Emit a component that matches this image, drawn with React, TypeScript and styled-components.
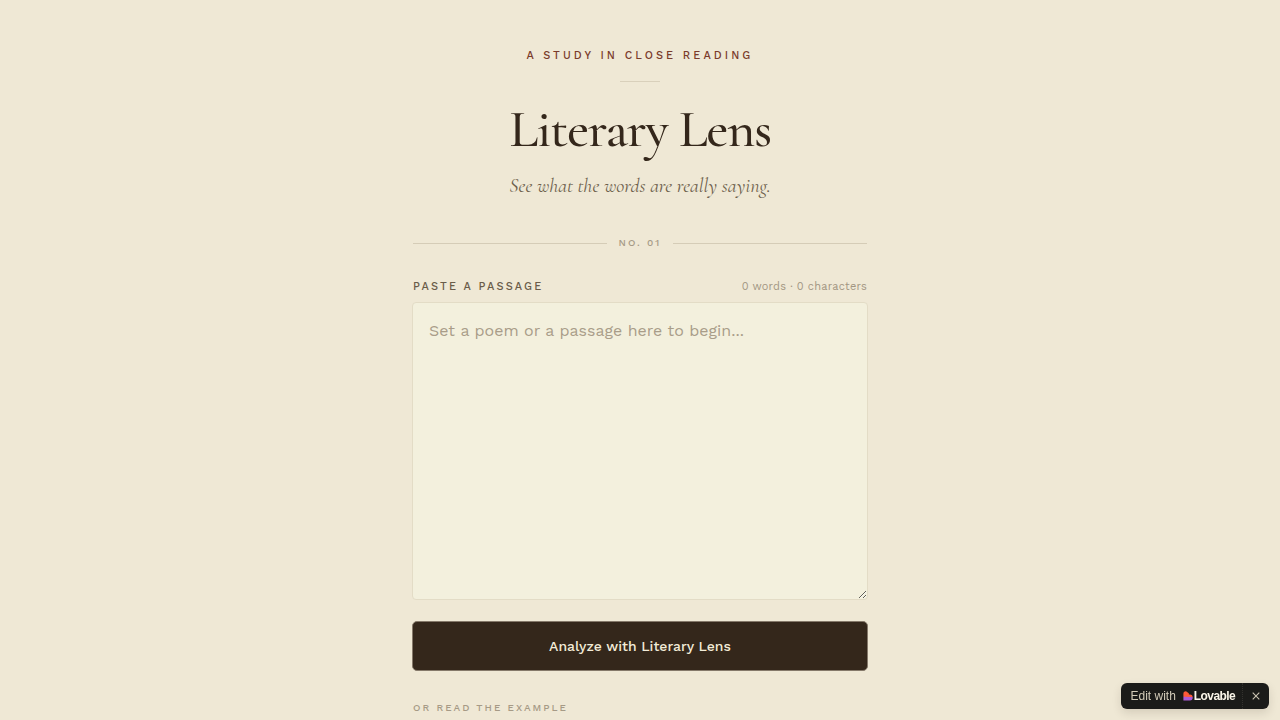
import React, { useState } from "react";
import styled, { createGlobalStyle } from "styled-components";

const sans = `"Work Sans", Inter, "Liberation Sans", sans-serif`;
const serif = `"Cormorant Garamond", "Liberation Serif", serif`;

const GlobalStyle = createGlobalStyle`
  *, *::before, *::after { box-sizing: border-box; }
  html { scrollbar-width: none; }
  body {
    margin: 0;
    min-height: 100vh;
    background: #efe8d5;
    color: #34271b;
    font-family: ${sans};
  }
`;

const Page = styled.main`
  width: 100%;
  max-width: 504px;
  margin: 0 auto;
  padding: 48px 24px 64px;
`;

const Header = styled.header`
  display: flex;
  flex-direction: column;
  align-items: center;
  text-align: center;
`;

const Caps = styled.span<{ $size: number; $color: string; $track: string }>`
  font-size: ${(p) => p.$size}px;
  line-height: 16px;
  font-weight: 500;
  letter-spacing: ${(p) => p.$track};
  text-transform: uppercase;
  color: ${(p) => p.$color};
`;

const ShortRule = styled.hr`
  width: 40px;
  height: 1px;
  margin: 17px 0 19px;
  border: 0;
  background: #d9d0bb;
`;

const Title = styled.h1`
  margin: 0;
  font: 500 54px/56px ${serif};
  letter-spacing: -0.025em;
`;

const Tagline = styled.p`
  margin: 15px 0 0;
  font: italic 400 20px/28px ${serif};
  color: #6d5f4c;
`;

const Divider = styled.div`
  display: flex;
  align-items: center;
  gap: 12px;
  margin: 35px 1px 0;

  &::before,
  &::after {
    content: "";
    flex: 1;
    height: 1px;
    background: #d5ccb7;
  }
`;

const Form = styled.form`
  display: flex;
  flex-direction: column;
  margin: 28px 0 0;
`;

const FieldHead = styled.div`
  display: flex;
  align-items: center;
  justify-content: space-between;
  padding: 0 1px;
  margin-bottom: 7px;
`;

const Count = styled.span`
  font-size: 11px;
  line-height: 16px;
  letter-spacing: 0.02em;
  color: #a29682;
`;

const Passage = styled.textarea`
  display: block;
  width: 100%;
  height: 298px;
  padding: 14px 16px;
  border: 1px solid #e3dcc6;
  border-radius: 4px;
  outline: none;
  resize: vertical;
  background: #f3f0dd;
  color: #34271b;
  font: 400 16px/28px ${sans};

  &::placeholder {
    color: #a99d89;
    opacity: 1;
  }
`;

const Submit = styled.button`
  height: 50px;
  margin-top: 21px;
  border: 1px solid #85796a;
  border-radius: 5px;
  background: #34271b;
  color: #f3ecd8;
  font: 500 14px/20px ${sans};
  cursor: pointer;
`;

const Example = styled.section`
  display: flex;
  padding: 0 1px;
  margin-top: 29px;
`;

const Badge = styled.aside`
  position: fixed;
  right: 11px;
  bottom: 11px;
  display: flex;
  align-items: center;
  height: 26px;
  padding-left: 9px;
  border-radius: 6px;
  background: #1b1b19;
  box-shadow: 0 4px 10px rgba(60, 45, 25, 0.14);
`;

const EditLink = styled.a`
  display: flex;
  align-items: center;
  padding-right: 7px;
  color: #d3cbb8;
  font: 400 12px/16px "Liberation Sans", sans-serif;
  text-decoration: none;

  svg { margin: 0 1px 0 7px; }
`;

const Brand = styled.b`
  color: #fbf6e9;
  letter-spacing: -0.05em;
`;

const Close = styled.button`
  display: grid;
  place-items: center;
  width: 27px;
  height: 26px;
  padding: 0 1px 0 0;
  border: 0;
  border-left: 1px dotted #33322e;
  background: none;
  color: #cbc3b1;
  cursor: pointer;
`;

function Heart() {
  return (
    <svg width="10" height="10" viewBox="0 0 10 10" aria-hidden="true">
      <defs>
        <linearGradient id="heart" x1="5" y1="0" x2="4.6" y2="10" gradientUnits="userSpaceOnUse">
          <stop offset="0.54" stopColor="#ff5a38" />
          <stop offset="0.62" stopColor="#ab5bd6" />
        </linearGradient>
      </defs>
      <path
        fill="url(#heart)"
        d="M3 0.3 5.8 2.3 5.9 3.6H6.9A2.9 2.9 0 0 1 9.7 6.5 2.9 2.9 0 0 1 6.8 9.5H0.4V3A2.6 2.6 0 0 1 3 0.3Z"
      />
    </svg>
  );
}

export default function App() {
  const [text, setText] = useState("");
  const [badge, setBadge] = useState(true);
  const words = text.split(/\s+/).filter(Boolean).length;

  return (
    <>
      <GlobalStyle />
      <Page>
        <Header>
          <Caps $size={11} $track="0.28em" $color="#7a3b2b">A study in close reading</Caps>
          <ShortRule />
          <Title>Literary Lens</Title>
          <Tagline>See what the words are really saying.</Tagline>
        </Header>
        <Divider>
          <Caps $size={10} $track="0.2em" $color="#a69a86">No. 01</Caps>
        </Divider>
        <Form onSubmit={(e) => e.preventDefault()}>
          <FieldHead>
            <Caps as="label" htmlFor="passage" $size={11} $track="0.2em" $color="#6a5c49">
              Paste a passage
            </Caps>
            <Count>{words} words · {text.length} characters</Count>
          </FieldHead>
          <Passage
            id="passage"
            value={text}
            onChange={(e) => setText(e.target.value)}
            placeholder="Set a poem or a passage here to begin..."
          />
          <Submit type="submit">Analyze with Literary Lens</Submit>
        </Form>
        <Example>
          <Caps $size={10} $track="0.2em" $color="#a69a86">Or read the example</Caps>
        </Example>
      </Page>
      {badge && (
        <Badge>
          <EditLink href="#edit">
            Edit with
            <Heart />
            <Brand>Lovable</Brand>
          </EditLink>
          <Close type="button" aria-label="Dismiss" onClick={() => setBadge(false)}>
            <svg width="8" height="8" viewBox="0 0 8 8" stroke="currentColor" strokeWidth="1.1" aria-hidden="true">
              <path d="M0.7 0.7 7.3 7.3M7.3 0.7 0.7 7.3" />
            </svg>
          </Close>
        </Badge>
      )}
    </>
  );
}
